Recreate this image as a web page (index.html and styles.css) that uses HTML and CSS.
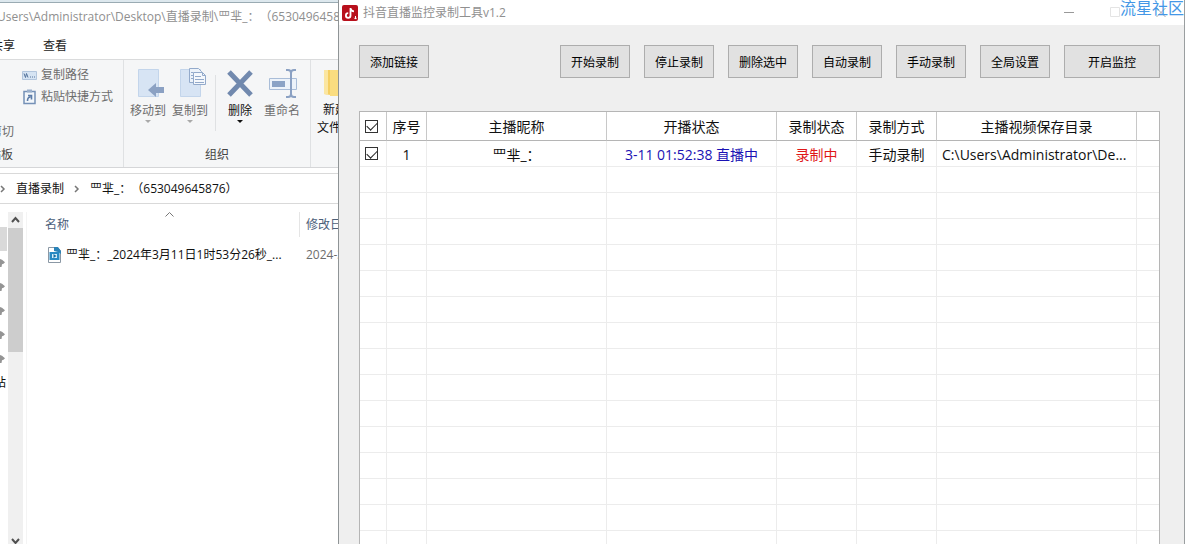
FILE: index.html
```html
<!DOCTYPE html>
<html lang="zh-CN">
<head>
<meta charset="utf-8">
<title>抖音直播监控录制工具v1.2</title>
<link rel="stylesheet" href="styles.css">
</head>
<body>
<div class="desktop">
  <section class="explorer">
    <header class="explorer-title"><span class="clipped-path">Users\Administrator\Desktop\直播录制\罒芈_：（653049645876）</span></header>
    <nav class="tabs"><button class="tab">共享</button><button class="tab">查看</button></nav>
    <div class="ribbon">
      <div class="group clipboard">
        <div class="group-body">
          <button class="cut"><svg width="11" height="9" viewBox="0 0 11 9"><path d="M2 0h8v9H2z" fill="#c5d5e8"/></svg>剪切</button>
          <div class="small-tools">
            <button class="small-tool"><svg width="15" height="16" viewBox="0 0 15 16"><path d="M0.500 4.500h14v8h-14z" fill="#d6e4f3" stroke="#b3c6dd"/><path d="M2 6.500l1.500 4 1-4 1.500 4M8 10h1M10 10h1M12 10h1" stroke="#54729a" fill="none"/></svg>复制路径</button>
            <button class="small-tool"><svg width="15" height="16" viewBox="0 0 15 16"><path d="M2 2.500h11v12H2z" fill="#f3f7fb" stroke="#7591b7" stroke-width="1.500"/><path d="M5 0.500h5v3H5z" fill="#9bb0cc"/><path d="M5.500 12c0-3 1-4 3-4M6 6.500h3.500v4" stroke="#5c7ca8" stroke-width="1.600" fill="none"/></svg>粘贴快捷方式</button>
          </div>
        </div>
        <div class="group-name">剪贴板</div>
      </div>
      <div class="group organize">
        <div class="group-body">
          <button class="tool"><svg width="32" height="32" viewBox="0 0 32 32"><path d="M6.500 1.500h20v27h-20z" fill="#d7e4f4" stroke="#c3d5eb"/><path d="M16 22l8-7v4h8v6h-8v4z" fill="#8ba1c3"/></svg>移动到<i class="down"></i></button>
          <button class="tool"><svg width="32" height="32" viewBox="0 0 32 32"><path d="M6.500 1.500h20v27h-20z" fill="#d7e4f4" stroke="#c3d5eb"/><path d="M15.500 0.500h9l3 3v11h-12z" fill="#edf3fa" stroke="#93aacb"/><path d="M19.500 4.500h9l3 3v9h-12z" fill="#f5f8fc" stroke="#93aacb"/><path d="M28.500 4.500v3h3M21 8.500h6M21 11.500h9M21 14.500h9M17 4.500h2M17 7.500h2M17 10.500h2" stroke="#93aacb" fill="none"/></svg>复制到<i class="down"></i></button>
          <span class="rule"></span>
          <button class="tool enabled"><svg width="32" height="32" viewBox="0 0 32 32"><path d="M5 4l22 23M27 4L5 27" stroke="#7189ae" stroke-width="5"/></svg>删除<i class="down"></i></button>
          <button class="tool"><svg width="32" height="32" viewBox="0 0 32 32"><path d="M3.500 10.500h27v11h-27z" fill="#edf3fa" stroke="#a9bdd8"/><path d="M6 13h13v6H6z" fill="#8ba3c6"/><path d="M20 2h2q3 0 3 3v21q0 3-3 3h-2M30 2h-2q-3 0-3 3v21q0 3 3 3h2" stroke="#8ba1c3" stroke-width="2" fill="none"/></svg>重命名</button>
        </div>
        <div class="group-name">组织</div>
      </div>
      <div class="group create">
        <button class="tool enabled folder"><svg width="32" height="32" viewBox="0 0 32 32"><path d="M5 2h13v26l-13-2z" fill="#f5cf63"/><path d="M5 2h4v25l-4-1z" fill="#fbe6a1"/><path d="M11 2h20v26H11z" fill="#fadd80"/></svg><span>新建</span><span>文件夹</span></button>
      </div>
    </div>
    <nav class="address">
      <svg width="6" height="8" viewBox="0 0 6 8"><path d="M1 1l3 3-3 3" stroke="#777" stroke-width="1.500" fill="none"/></svg>
      <a href="#">直播录制</a>
      <svg width="6" height="8" viewBox="0 0 6 8"><path d="M1 1l3 3-3 3" stroke="#777" stroke-width="1.500" fill="none"/></svg>
      <a href="#">罒芈_：（653049645876）</a>
    </nav>
    <div class="panes">
      <aside class="quick">
        <span class="selected"></span>
        <span class="pin"></span><span class="pin"></span><span class="pin"></span><span class="pin"></span><span class="pin"></span>
        <span class="site">网站</span>
      </aside>
      <div class="scrollbar">
        <svg width="15" height="16" viewBox="0 0 15 16"><path d="M4 10l3.500-4 3.500 4" stroke="#505050" stroke-width="2" fill="none"/></svg>
        <span class="thumb"></span>
        <svg class="scroll-end" width="15" height="12" viewBox="0 0 15 12"><path d="M4 7l3.500 4 3.500-4" stroke="#505050" stroke-width="2" fill="none"/></svg>
      </div>
      <div class="files">
        <div class="file-head">
          <span class="name-col">名称</span>
          <svg class="sort" width="9" height="5" viewBox="0 0 9 5"><path d="M0.500 4.500l4-4 4 4" stroke="#777" fill="none"/></svg>
          <span class="date-col">修改日期</span>
        </div>
        <div class="file-row">
          <span class="name-col"><svg width="15" height="16" viewBox="0 0 15 16"><path d="M1.500 0.500h9l3 3v12h-12z" fill="#fff" stroke="#8b98a5"/><path d="M7 0h4l3 4v3l-3-2-4-1z" fill="#2b83b8"/><path d="M2.500 5h10v8h-10z" fill="#278ac4"/><path d="M5 7h5v4H5z" fill="#d5effb"/><path d="M6.500 7l3 2-3 2z" fill="#176a9d"/></svg>罒芈_：_2024年3月11日1时53分26秒_...</span>
          <span class="date-col">2024-3-11</span>
        </div>
      </div>
    </div>
  </section>

  <main class="recorder">
    <header class="titlebar">
      <svg class="logo" width="16" height="16" viewBox="0 0 16 16"><rect width="16" height="16" rx="2" fill="#b8101c"/><path d="M8.500 3v7.500a2.300 2.300 0 1 1-2.300-2.300M8.500 3.500c.5 2 1.800 2.700 3.500 2.800" stroke="#fff" stroke-width="1.800" fill="none"/><path d="M13.500 11v3M12.300 12.800l1.200 1.300 1.200-1.300" stroke="#fff" fill="none"/></svg>
      <h1>抖音直播监控录制工具v1.2</h1>
      <div class="controls">
        <button aria-label="最小化"><svg width="11" height="11" viewBox="0 0 11 11"><path d="M0 5.500h10" stroke="#999"/></svg></button>
        <button aria-label="最大化"><svg width="11" height="11" viewBox="0 0 11 11"><path d="M0.500 0.500h9v9h-9z" stroke="#e4e4e4" fill="none"/></svg></button>
        <button aria-label="关闭"><svg width="11" height="11" viewBox="0 0 11 11"><path d="M0.500 1l9 9M9.500 1l-9 9" stroke="#aaa"/></svg></button>
      </div>
      <span class="watermark">流星社区</span>
    </header>
    <div class="content">
      <div class="toolbar">
        <button class="btn add">添加链接</button>
        <button class="btn">开始录制</button>
        <button class="btn">停止录制</button>
        <button class="btn">删除选中</button>
        <button class="btn">自动录制</button>
        <button class="btn">手动录制</button>
        <button class="btn">全局设置</button>
        <button class="btn wide">开启监控</button>
      </div>
      <table class="list">
        <colgroup><col class="c-check"><col class="c-no"><col class="c-nick"><col class="c-live"><col class="c-mid"><col class="c-mid"><col class="c-dir"><col></colgroup>
        <thead><tr><th><input type="checkbox" aria-label="全选" checked></th><th>序号</th><th>主播昵称</th><th>开播状态</th><th>录制状态</th><th>录制方式</th><th>主播视频保存目录</th><th></th></tr></thead>
        <tbody>
          <tr><td><input type="checkbox" aria-label="选择第1行" checked></td><td>1</td><td>罒芈_：</td><td class="live">3-11 01:52:38 直播中</td><td class="recording">录制中</td><td>手动录制</td><td class="dir">C:\Users\Administrator\De...</td><td></td></tr>
          <tr><td></td><td></td><td></td><td></td><td></td><td></td><td></td><td></td></tr>
          <tr><td></td><td></td><td></td><td></td><td></td><td></td><td></td><td></td></tr>
          <tr><td></td><td></td><td></td><td></td><td></td><td></td><td></td><td></td></tr>
          <tr><td></td><td></td><td></td><td></td><td></td><td></td><td></td><td></td></tr>
          <tr><td></td><td></td><td></td><td></td><td></td><td></td><td></td><td></td></tr>
          <tr><td></td><td></td><td></td><td></td><td></td><td></td><td></td><td></td></tr>
          <tr><td></td><td></td><td></td><td></td><td></td><td></td><td></td><td></td></tr>
          <tr><td></td><td></td><td></td><td></td><td></td><td></td><td></td><td></td></tr>
          <tr><td></td><td></td><td></td><td></td><td></td><td></td><td></td><td></td></tr>
          <tr><td></td><td></td><td></td><td></td><td></td><td></td><td></td><td></td></tr>
          <tr><td></td><td></td><td></td><td></td><td></td><td></td><td></td><td></td></tr>
          <tr><td></td><td></td><td></td><td></td><td></td><td></td><td></td><td></td></tr>
          <tr><td></td><td></td><td></td><td></td><td></td><td></td><td></td><td></td></tr>
          <tr><td></td><td></td><td></td><td></td><td></td><td></td><td></td><td></td></tr>
          <tr><td></td><td></td><td></td><td></td><td></td><td></td><td></td><td></td></tr>
        </tbody>
      </table>
    </div>
  </main>
</div>
</body>
</html>
```
FILE: styles.css
```css
* { box-sizing: border-box; }
body {
  margin: 0;
  overflow: hidden;
  font: 12px/16px "Open Sans", "Noto Sans CJK SC", sans-serif;
  text-spacing-trim: space-all;
  color: #111;
  background: #fff;
}
button {
  font: inherit;
  color: inherit;
  border: 0;
  padding: 0;
  background: none;
  white-space: nowrap;
}
svg { display: block; flex: none; }
.desktop { display: flex; height: 100vh; overflow: hidden; }

/* File explorer */
.explorer {
  flex: 0 0 338px;
  display: flex;
  flex-direction: column;
  overflow: hidden;
  white-space: nowrap;
  background: #fff;
}
.explorer-title {
  height: 32px;
  padding-top: 7px;
  border-top: 2px solid #dde8ee;
  box-shadow: inset 0 1px #9aabb3;
  color: #8f8f8f;
}
.clipped-path { margin-left: -3px; }
.tabs { display: flex; height: 27px; gap: 28px; padding-top: 6px; align-items: flex-start; margin-left: -9px; color: #222; }
.ribbon {
  display: flex;
  height: 109px;
  background: #f5f6f7;
  border-top: 1px solid #dadbdc;
  border-bottom: 1px solid #d5d6d8;
  color: #6d6d6d;
}
.group { display: flex; flex-direction: column; border-right: 1px solid #dfe1e3; flex: none; }
.group-body { display: flex; flex: 1; }
.group-name { height: 20px; color: #444; text-align: center; }
.clipboard { width: 124px; }
.clipboard .group-name { text-align: left; margin-left: -23px; }
.cut { width: 24px; margin-left: -10px; padding-top: 47px; text-align: left; display: flex; flex-direction: column; gap: 8px; align-items: flex-start; }
.small-tools { display: flex; flex-direction: column; gap: 6px; padding: 7px 0 0 8px; }
.small-tool { display: flex; gap: 4px; }
.organize { width: 187px; }
.organize .group-body { padding-left: 3px; }
.tool { display: flex; flex-direction: column; align-items: center; width: 42px; padding-top: 8px; gap: 3px; }
.enabled { color: #111; }
.down { border: 3px solid transparent; border-top-color: #a9a9a9; border-bottom: 0; margin-top: -2px; }
.enabled .down { border-top-color: #111; }
.rule { width: 1px; height: 56px; margin: 15px 3px 0 4px; background: #dfe1e3; }
.create { border: 0; padding-left: 3px; }
.folder { gap: 2px; }

.address {
  display: flex;
  align-items: center;
  gap: 10px;
  height: 31px;
  margin-top: 5px;
  border-top: 1px solid #d9d9d9;
  border-bottom: 1px solid #d9d9d9;
  flex: none;
}
.address a { color: inherit; text-decoration: none; }
.panes { display: flex; flex: 1; padding-top: 8px; min-height: 0; }
.quick { width: 8px; padding-top: 15px; display: flex; flex-direction: column; overflow: hidden; align-items: flex-end; }
.selected { width: 7px; height: 24px; margin-right: 1px; background: #d9d9d9; flex: none; }
.pin { width: 8px; height: 24px; flex: none; display: flex; align-items: center; }
.pin::before { content: ""; width: 5px; height: 8px; background: #949494; clip-path: polygon(0 0, 40% 10%, 100% 40%, 70% 60%, 40% 65%, 30% 100%, 0 100%); }
.site { margin: 4px 2px 0 0; }
.scrollbar { width: 15px; display: flex; flex-direction: column; background: #f0f0f0; }
.thumb { height: 124px; background: #cdcdcd; }
.scroll-end { margin-top: auto; }
.files { flex: 1; min-width: 0; margin-left: 3px; border-left: 1px solid #f4f4f4; }
.file-head, .file-row { display: flex; padding-left: 18px; }
.file-head { position: relative; height: 25px; color: #4c607a; line-height: 25px; }
.sort { position: absolute; left: 138px; top: 0; }
.name-col { display: flex; gap: 4px; width: 254px; flex: none; }
.date-col { padding-left: 6px; }
.file-head .date-col { border-left: 1px solid #e5e5e5; }
.file-row { padding: 10px 0 0 20px; }
.file-row .name-col { width: 252px; }
.file-row .date-col { color: #6d6d6d; padding-left: 7px; }

/* Recorder window */
.recorder {
  flex: 1;
  min-width: 0;
  display: flex;
  flex-direction: column;
  background: #efefef;
  border-left: 1px solid #8f9496;
  border-right: 1px solid #9a9ea0;
}
.titlebar { position: relative; display: flex; align-items: center; height: 25px; padding-left: 3px; background: #fff; flex: none; }
h1 { margin: 0 0 0 5px; font-size: 12px; font-weight: 400; color: #909090; }
.controls { display: flex; margin-left: auto; }
.controls button { width: 46px; display: flex; justify-content: center; }
.watermark { position: absolute; right: 0; top: 0; font-size: 16px; color: #4497e6; width: 64px; white-space: nowrap; }
.content { padding: 20px 24px 0 20px; overflow: hidden; flex: 1; }
.toolbar { display: flex; gap: 14px; margin-bottom: 33px; }
.btn { width: 70px; height: 33px; padding-top: 2px; background: #e1e1e1; border: 1px solid #adadad; color: #000; }
.add { margin-right: auto; }
.wide { width: 96px; }
.list { width: 100%; table-layout: fixed; border-collapse: separate; border-spacing: 0; background: #fff; border: 1px solid #b5b5b5; font-size: 14px; line-height: 20px; }
.c-check { width: 27px; }
.c-no { width: 40px; }
.c-nick { width: 180px; }
.c-live { width: 170px; }
.c-mid { width: 80px; }
.c-dir { width: 200px; }
th, td { padding: 2px 0 0; font-weight: 400; text-align: center; white-space: nowrap; overflow: hidden; }
th { height: 29px; border-right: 1px solid #c8c8c8; border-bottom: 1px solid #b5b5b5; }
td { height: 26px; border-right: 1px solid #ececec; border-bottom: 1px solid #ececec; }
th:first-child, td:first-child { padding: 0; }
th:last-child, td:last-child { border-right: 0; }
.live { color: #1a12b4; }
.recording { color: #e01818; }
.list .dir { text-align: left; padding-left: 5px; }
input[type="checkbox"] {
  appearance: none;
  display: flex;
  align-items: center;
  justify-content: center;
  width: 13px;
  height: 13px;
  margin: 0 0 0 5px;
  border: 1px solid #333;
  background: #fff;
}
input[type="checkbox"]:checked::before {
  content: "";
  width: 9px;
  height: 5px;
  margin-bottom: 2px;
  border: solid #222;
  border-width: 0 0 1px 1px;
  transform: rotate(-45deg);
}
```
